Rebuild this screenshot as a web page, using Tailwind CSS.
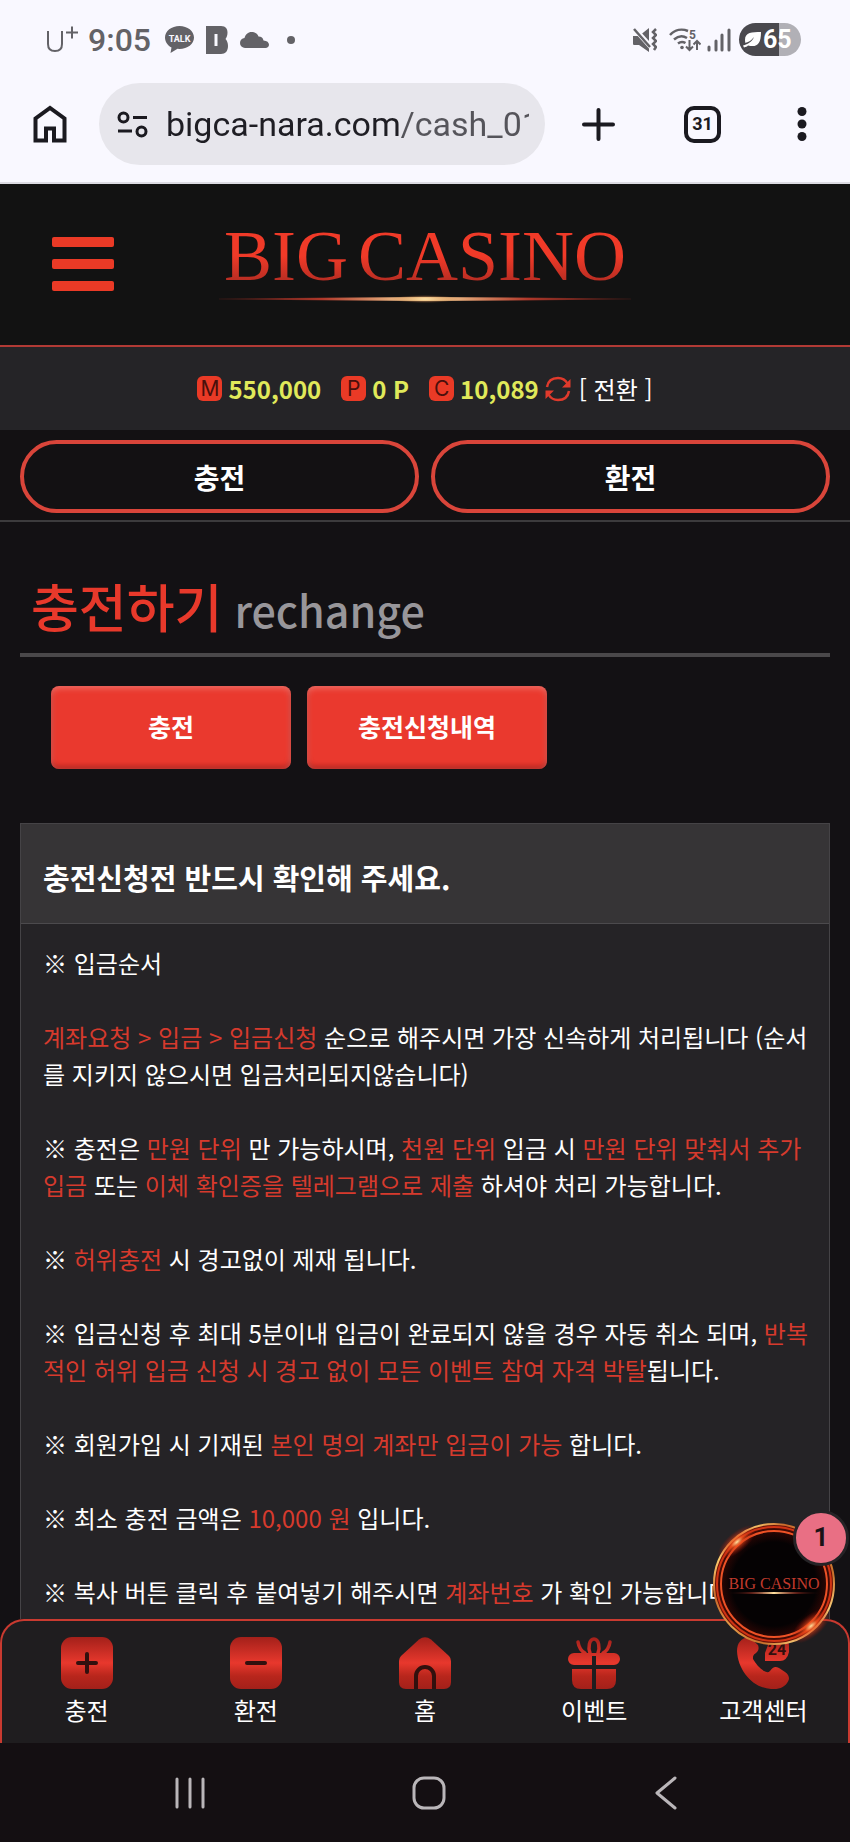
<!DOCTYPE html>
<html lang="ko">
<head>
  <meta charset="UTF-8" />
  <meta name="viewport" content="width=device-width, initial-scale=1.0" />
  <title>BIG CASINO - 충전하기</title>
  <script src="https://cdn.jsdelivr.net/npm/@tailwindcss/browser@4"></script>
</head>
<body class="h-screen flex flex-col overflow-hidden bg-[#131114] text-white font-['Noto_Sans_CJK_KR',sans-serif]">

  <!-- Status bar -->
  <div class="shrink-0 h-[79px] bg-[#f9f8ff] pl-[46px] pr-[49px] flex items-center justify-between text-[#636267] font-[Roboto,sans-serif]">
    <div class="flex items-center">
      <svg class="w-8 h-7" viewBox="0 0 32 28" fill="none" stroke="currentColor" stroke-width="2">
        <path d="M2 5v13c0 5 3 7 7 7s7-2 7-7V5" />
        <path d="M20 6.500h12M26 .5v12" />
      </svg>
      <span class="ml-2.5 text-[32px] leading-10 font-medium">9:05</span>
      <svg class="ml-3.5 w-[29px] h-7" viewBox="0 0 29 28">
        <path fill="currentColor" d="M14.500 0C6.500 0 0 5 0 11.500c0 4.300 2.600 8 6.500 10L5.500 27l7-4.200 2 .2c8 0 14.500-5 14.500-11.500S22.500 0 14.500 0z" />
        <text x="14.500" y="15.500" text-anchor="middle" font-size="9" font-weight="700" fill="#f9f8ff">TALK</text>
      </svg>
      <svg class="ml-3 w-[22px] h-7" viewBox="0 0 22 28">
        <path fill="currentColor" d="M0 0h15c5 0 6.500 3 6.500 6.500 0 3-.8 5-2 6.500 1.500 1.500 2.500 4 2.500 7 0 5-2.500 8-7 8H0z" />
        <path fill="#f9f8ff" d="M8.500 8h3v12h-3z" />
      </svg>
      <svg class="ml-3 w-[29px] h-4" viewBox="0 0 29 16" fill="currentColor">
        <path d="M5 16a5 5 0 0 1-5-5c0-3 2-4.500 4.500-5C5.500 2.500 8 0 11.500 0c3.500 0 6 1.800 7 4.500 3 0 4.500 1.500 5 4 3.500.2 5.500 2 5.500 4.300 0 2-1.500 3.200-3.500 3.200z" />
      </svg>
      <span class="ml-[18px] size-2 rounded-full bg-current"></span>
    </div>
    <div class="flex items-center">
      <svg class="w-6 h-6" viewBox="0 0 24 24">
        <path fill="currentColor" d="M0 8h6l10-8v24L6 17H1.500C.5 17 0 16.500 0 15.500z" />
        <path stroke="#f9f8ff" stroke-width="5" d="M0-1l18 20" />
        <path stroke="currentColor" stroke-width="2.500" d="M1 1l16 18" />
        <path fill="none" stroke="currentColor" stroke-width="2.500" d="M23 1l-3 3 3 3-3 3 3 3-3 3 3 3-2 3" />
      </svg>
      <svg class="ml-3 w-8 h-6" viewBox="0 0 32 24" fill="none" stroke="currentColor" stroke-width="2.500">
        <path d="M1 7C6 1.500 13 .5 19 3M5 11.500c4-3.500 9-4 13-1.500M9 15.500c2.500-2 5-2 7.500-.5" />
        <circle cx="13" cy="19.500" r="1.800" fill="currentColor" stroke="none" />
        <path d="M20.500 12v10M17 18.500l3.500 3.500 3.500-3.500M28 22V13M24.500 16.500L28 13l3.500 3.500" stroke-width="2" />
        <text x="20" y="11" font-size="12" font-weight="700" fill="currentColor" stroke="none">5</text>
      </svg>
      <svg class="ml-1.5 w-6 h-6" viewBox="0 0 24 24" stroke="currentColor" stroke-width="3" stroke-linecap="round">
        <path d="M2 19v3M9 13v9M15 7v15M22 2v20" />
      </svg>
      <div class="ml-2 w-[62px] h-[33px] rounded-full flex items-center bg-linear-to-r from-[#4a494e] from-65% to-[#b1b0b6] to-65% text-white">
        <svg class="ml-1 w-[18px] h-4" viewBox="0 0 18 16" fill="currentColor">
          <path d="M18 0c-9 0-16 0-16 8 0 2 .5 3 .5 3C5 10 8 9 11 5 9 10 5 12 0 13.500l1 2C3 15 4 14.500 5 13.500c9 2 13-1 13-13.500z" />
        </svg>
        <span class="ml-0.5 text-[25px] leading-8 font-bold">65</span>
      </div>
    </div>
  </div>

  <!-- Browser toolbar -->
  <div class="shrink-0 h-[105px] bg-[#f9f8ff] border-b-2 border-[#dcdbe2] pt-1 pb-[17px] pl-8 pr-[43px] flex items-center text-[#1b1a20] font-[Roboto,sans-serif]">
    <button type="button" aria-label="홈페이지">
      <svg class="w-[36px] h-[38px]" viewBox="0 0 36 38" fill="none" stroke="currentColor" stroke-width="4">
        <path d="M3.500 35.500V13.500L18 3l14.500 10.500v22H22V23.500h-8v12z" />
      </svg>
    </button>
    <div class="ml-[31px] flex-1 min-w-0 h-[82px] rounded-full bg-[#e7e6ec] pl-[18px] pr-4 flex items-center">
      <svg class="shrink-0 w-[31px] h-[27px]" viewBox="0 0 31 27" fill="none" stroke="currentColor" stroke-width="3">
        <circle cx="6.500" cy="6.500" r="4.500" />
        <path d="M16 6.500h14M1 20h14" />
        <circle cx="24.500" cy="20.500" r="4.500" />
      </svg>
      <input type="text" aria-label="주소창" value="bigca-nara.com/cash_01.asp"
        class="ml-[18px] flex-1 min-w-0 h-14 text-[34px] outline-none text-transparent bg-clip-text bg-linear-to-r from-[#1f1e24] from-[233px] to-[#55545a] to-[237px]" />
    </div>
    <button type="button" aria-label="새 탭" class="ml-[37px]">
      <svg class="size-[33px]" viewBox="0 0 33 33" stroke="currentColor" stroke-width="4" stroke-linecap="round">
        <path d="M16.500 2v29M2 16.500h29" />
      </svg>
    </button>
    <button type="button" aria-label="탭 31개" class="ml-[69px] size-[37px] border-4 border-current rounded-[10px] text-[18px] leading-7 font-bold">31</button>
    <button type="button" aria-label="메뉴" class="ml-[76px]">
      <svg class="w-[10px] h-[34px]" viewBox="0 0 10 34" fill="currentColor">
        <circle cx="5" cy="4.500" r="4.500" /><circle cx="5" cy="17" r="4.500" /><circle cx="5" cy="29.500" r="4.500" />
      </svg>
    </button>
  </div>

  <!-- Header -->
  <header class="shrink-0 h-[163px] bg-[#121212] border-b-2 border-[#b23a35] px-[52px] pb-0.5 grid grid-cols-[62px_1fr_62px] items-center">
    <button type="button" aria-label="전체 메뉴" class="flex flex-col gap-3">
      <span class="w-full h-[10px] rounded-xs bg-[#ea3a26]"></span>
      <span class="w-full h-[10px] rounded-xs bg-[#ea3a26]"></span>
      <span class="w-full h-[10px] rounded-xs bg-[#ea3a26]"></span>
    </button>
    <a href="#" class="pb-1 flex flex-col items-center">
      <span class="flex gap-2.5 text-[72px] leading-[76px] font-['Liberation_Serif',serif] text-transparent bg-clip-text bg-linear-to-b from-[#f03a28] from-50% to-[#b52c22] to-85%">
        <span>BIG</span><span>CASINO</span>
      </span>
      <svg class="w-[420px] h-3" viewBox="0 0 420 12">
        <defs>
          <linearGradient id="flare">
            <stop offset="0" stop-color="#a02a20" stop-opacity=".2" />
            <stop offset=".25" stop-color="#b0382a" />
            <stop offset=".5" stop-color="#ffe2a0" />
            <stop offset=".75" stop-color="#b0382a" />
            <stop offset="1" stop-color="#a02a20" stop-opacity=".2" />
          </linearGradient>
          <radialGradient id="glow">
            <stop offset="0" stop-color="#ffe9b0" />
            <stop offset="1" stop-color="#c06a30" stop-opacity="0" />
          </radialGradient>
        </defs>
        <path fill="url(#flare)" d="M4 4.500L210 3l206 1.500v1L210 7 4 5.500z" />
        <ellipse cx="210" cy="5" rx="34" ry="4" fill="url(#glow)" />
      </svg>
    </a>
  </header>

  <!-- Balance -->
  <div class="shrink-0 h-[83px] bg-[#252427] flex items-center justify-center text-[24px] leading-9 font-bold text-[#e0e95a]">
    <span class="size-[25px] rounded-md bg-[#ea3a26] text-[#4a100c] text-[21px] leading-[25px] text-center font-normal font-[Inter,sans-serif]">M</span>
    <span class="ml-1.5">550,000</span>
    <span class="ml-5 size-[25px] rounded-md bg-[#ea3a26] text-[#4a100c] text-[21px] leading-[25px] text-center font-normal font-[Inter,sans-serif]">P</span>
    <span class="ml-1.5">0 P</span>
    <span class="ml-5 size-[25px] rounded-md bg-[#ea3a26] text-[#4a100c] text-[21px] leading-[25px] text-center font-normal font-[Inter,sans-serif]">C</span>
    <span class="ml-1.5">10,089</span>
    <button type="button" class="ml-1.5 flex items-center gap-2 font-normal text-white">
      <svg class="size-[26px] text-[#e03a2c]" viewBox="0 0 26 26" fill="none" stroke="currentColor" stroke-width="2.500">
        <path d="M2 11C3 5 7.500 2 13 2c4 0 7.500 2 9.500 5.500M24 15c-1 6-5.500 9-11 9-4 0-7.500-2-9.500-5.500" />
        <path fill="currentColor" stroke="none" d="M25.500 3v8.500H17zM.5 23v-8.500H9z" />
      </svg>
      [ 전환 ]
    </button>
  </div>

  <div class="shrink-0 h-[92px] px-5 pt-2.5 border-b-2 border-[#3c3b3d] bg-[#131113] grid grid-cols-2 gap-3">
    <a href="#" class="h-[73px] rounded-full border-4 border-[#d9453a] flex items-center justify-center text-[28px] leading-10 font-bold">충전</a>
    <a href="#" class="h-[73px] rounded-full border-4 border-[#d9453a] flex items-center justify-center text-[28px] leading-10 font-bold">환전</a>
  </div>

  <!-- Content -->
  <main class="flex-1 min-h-0 overflow-hidden px-5 pt-[51px]">
    <h1 class="px-[11px] pb-3.5 border-b-4 border-[#4a484a] text-[52px] leading-[65px] font-medium text-[#e8392b] flex items-baseline gap-3">
      충전하기 <span class="text-[43px] leading-[60px] text-[#98969a]">rechange</span>
    </h1>

    <div class="mt-[29px] ml-[31px] flex gap-4">
      <button type="button" class="w-60 h-[83px] pb-1 rounded-lg bg-[#ea392e] text-[25px] leading-9 font-bold inset-shadow-[0_2px_6px_rgb(255_255_255/0.3),0_-3px_5px_rgb(120_10_10/0.5)]">충전</button>
      <button type="button" class="w-60 h-[83px] pb-1 rounded-lg bg-[#ea392e] text-[25px] leading-9 font-bold inset-shadow-[0_2px_6px_rgb(255_255_255/0.3),0_-3px_5px_rgb(120_10_10/0.5)]">충전신청내역</button>
    </div>

    <section class="mt-[54px] border border-[#454346] bg-[#252326]">
      <h2 class="h-[100px] px-[22px] pt-1.5 flex items-center bg-[#363436] border-b border-[#4c4a4d] text-[29px] leading-10 font-bold">충전신청전 반드시 확인해 주세요.</h2>
      <div class="pl-[22px] pr-2.5 py-5 space-y-[37px] text-[24px] leading-[37px] break-all">
        <p>※ 입금순서</p>
        <p><span class="text-[#d63a2d]">계좌요청 &gt; 입금 &gt; 입금신청</span> 순으로 해주시면 가장 신속하게 처리됩니다 (순서를 지키지 않으시면 입금처리되지않습니다)</p>
        <p>※ 충전은 <span class="text-[#d63a2d]">만원 단위</span> 만 가능하시며, <span class="text-[#d63a2d]">천원 단위</span> 입금 시 <span class="text-[#d63a2d]">만원 단위 맞춰서 추가 입금</span> 또는 <span class="text-[#d63a2d]">이체 확인증을 텔레그램으로 제출</span> 하셔야 처리 가능합니다.</p>
        <p>※ <span class="text-[#d63a2d]">허위충전</span> 시 경고없이 제재 됩니다.</p>
        <p>※ 입금신청 후 최대 5분이내 입금이 완료되지 않을 경우 자동 취소 되며, <span class="text-[#d63a2d]">반복적인 허위 입금 신청 시 경고 없이 모든 이벤트 참여 자격 박탈</span>됩니다.</p>
        <p>※ 회원가입 시 기재된 <span class="text-[#d63a2d]">본인 명의 계좌만 입금이 가능</span> 합니다.</p>
        <p>※ 최소 충전 금액은 <span class="text-[#d63a2d]">10,000 원</span> 입니다.</p>
        <p>※ 복사 버튼 클릭 후 붙여넣기 해주시면 <span class="text-[#d63a2d]">계좌번호</span> 가 확인 가능합니다.</p>
      </div>
    </section>
  </main>

  <!-- Bottom menu -->
  <nav class="relative shrink-0 h-[124px]">
    <div class="h-full rounded-t-[24px] border-2 border-b-0 border-[#c93a30] bg-[#1f1d1f] pt-4 grid grid-cols-5 text-[24px] leading-[34px] text-center">
      <a href="#" class="flex flex-col items-center gap-1">
        <svg class="size-[52px]" viewBox="0 0 52 52">
          <defs>
            <linearGradient id="red" gradientUnits="userSpaceOnUse" x1="0" y1="0" x2="0" y2="52">
              <stop offset="0" stop-color="#a3201a" />
              <stop offset=".5" stop-color="#e8382d" />
              <stop offset=".75" stop-color="#b8261c" />
              <stop offset="1" stop-color="#a3201a" />
            </linearGradient>
          </defs>
          <rect width="52" height="52" rx="11" fill="url(#red)" />
          <path stroke="#32100e" stroke-width="4" stroke-linecap="round" d="M26 17v18M17 26h18" />
        </svg>
        충전
      </a>
      <a href="#" class="flex flex-col items-center gap-1">
        <svg class="size-[52px]" viewBox="0 0 52 52">
          <rect width="52" height="52" rx="11" fill="url(#red)" />
          <path stroke="#32100e" stroke-width="4" stroke-linecap="round" d="M17 26h18" />
        </svg>
        환전
      </a>
      <a href="#" class="flex flex-col items-center gap-1">
        <svg class="size-[52px]" viewBox="0 0 52 52">
          <path fill="url(#red)" d="M20 2.500Q26-2 32 2.500L50 19q2 2 2 5v21q0 7-7 7H7q-7 0-7-7V24q0-3 2-5z" />
          <path fill="none" stroke="#32100e" stroke-width="4" d="M17 52V39a9 9 0 0 1 18 0v13" />
        </svg>
        홈
      </a>
      <a href="#" class="flex flex-col items-center gap-1">
        <svg class="size-[52px]" viewBox="0 0 52 52">
          <path fill="none" stroke="url(#red)" stroke-width="3.500" stroke-linecap="round" d="M10 5c1 6 3 9 7 11M42 5c-1 6-3 9-7 11M22 16c-2-5-1-14 4-14s6 9 4 14" />
          <path fill="url(#red)" d="M6 16h40a6 6 0 0 1 0 12H28v-9h-4v9H6a6 6 0 0 1 0-12zM4 32h20v20H13q-9 0-9-9zM28 32h20v11q0 9-9 9H28z" />
        </svg>
        이벤트
      </a>
      <a href="#" class="flex flex-col items-center gap-1">
        <svg class="size-[52px]" viewBox="0 0 52 52">
          <path fill="url(#red)" d="M12 0C4 1 0 6 0 14c1 20 16 37 34 38 9 1 16-3 18-10 0-3-1-5-4-7l-6-4c-4-2-6-1-9 3-2 2-4 1-6 0-5-3-8-7-11-12 0-3 0-4 3-6 3-3 3-5 2-8z" />
          <path fill="url(#red)" d="M34 0h12q6 2 6 9v6q-2 9-9 9H28q0-4 0-8z" />
          <text x="40" y="18" text-anchor="middle" font-size="16" font-weight="700" fill="#32100e" font-family="Roboto">24</text>
        </svg>
        고객센터
      </a>
    </div>

    <!-- Floating chat button -->
    <button type="button" aria-label="새 메시지 1개" class="absolute right-[15px] -top-24 size-[122px]">
      <svg class="size-full" viewBox="0 0 122 122">
        <defs>
          <linearGradient id="ring" x1="0" y1="0" x2="1" y2="1">
            <stop offset="0" stop-color="#c4501c" />
            <stop offset=".16" stop-color="#ffcf70" />
            <stop offset=".3" stop-color="#c8682a" />
            <stop offset=".5" stop-color="#e09a48" />
            <stop offset=".7" stop-color="#c8702a" />
            <stop offset=".86" stop-color="#ffd880" />
            <stop offset="1" stop-color="#c4501c" />
          </linearGradient>
          <radialGradient id="hot">
            <stop offset="0" stop-color="#ffe2a0" />
            <stop offset=".3" stop-color="#f0501c" stop-opacity=".8" />
            <stop offset="1" stop-color="#a01008" stop-opacity="0" />
          </radialGradient>
          <radialGradient id="core">
            <stop offset=".7" stop-color="#050203" />
            <stop offset=".88" stop-color="#2a0604" />
            <stop offset="1" stop-color="#7a1408" />
          </radialGradient>
        </defs>
        <circle cx="61" cy="61" r="60" fill="url(#core)" />
        <circle cx="61" cy="61" r="60" fill="none" stroke="url(#ring)" stroke-width="2" />
        <circle cx="61" cy="61" r="57" fill="none" stroke="#d03414" stroke-width="2" />
        <circle cx="61" cy="61" r="53" fill="none" stroke="#ee5226" stroke-width="2" />
        <ellipse cx="24" cy="19" rx="24" ry="10" fill="url(#hot)" transform="rotate(-40 24 19)" />
        <ellipse cx="98" cy="103" rx="24" ry="11" fill="url(#hot)" transform="rotate(-40 98 103)" />
        <text x="61" y="66" text-anchor="middle" font-size="16" fill="#c03a2c" font-family="Liberation Serif">BIG CASINO</text>
        <path fill="url(#flare)" d="M15 70l46-1 46 1-46 1z" />
      </svg>
      <span class="absolute -top-[13px] -right-[14px] size-14 rounded-full border-3 border-[#252326] bg-[#e96f84] text-[#1b1216] text-[26px] leading-[48px] font-bold font-[Roboto,sans-serif]">1</span>
    </button>
  </nav>

  <!-- System navigation -->
  <div class="shrink-0 h-[99px] bg-[#140f12] pl-[174px] pr-[170px] flex items-center justify-between text-[#bab6b9]">
    <button type="button" aria-label="최근 앱" class="w-8 flex justify-center">
      <svg class="w-[30px] h-8" viewBox="0 0 30 32" stroke="currentColor" stroke-width="3" stroke-linecap="round">
        <path d="M2 2v28M15 2v28M28 2v28" />
      </svg>
    </button>
    <button type="button" aria-label="홈">
      <svg class="size-[34px]" viewBox="0 0 34 34" fill="none" stroke="currentColor" stroke-width="3">
        <rect x="2" y="2" width="30" height="30" rx="10" />
      </svg>
    </button>
    <button type="button" aria-label="뒤로" class="w-7 flex justify-center">
      <svg class="w-[22px] h-[34px]" viewBox="0 0 22 34" fill="none" stroke="currentColor" stroke-width="3" stroke-linecap="round" stroke-linejoin="round">
        <path d="M20 2L2 17l18 15" />
      </svg>
    </button>
  </div>
</body>
</html>
